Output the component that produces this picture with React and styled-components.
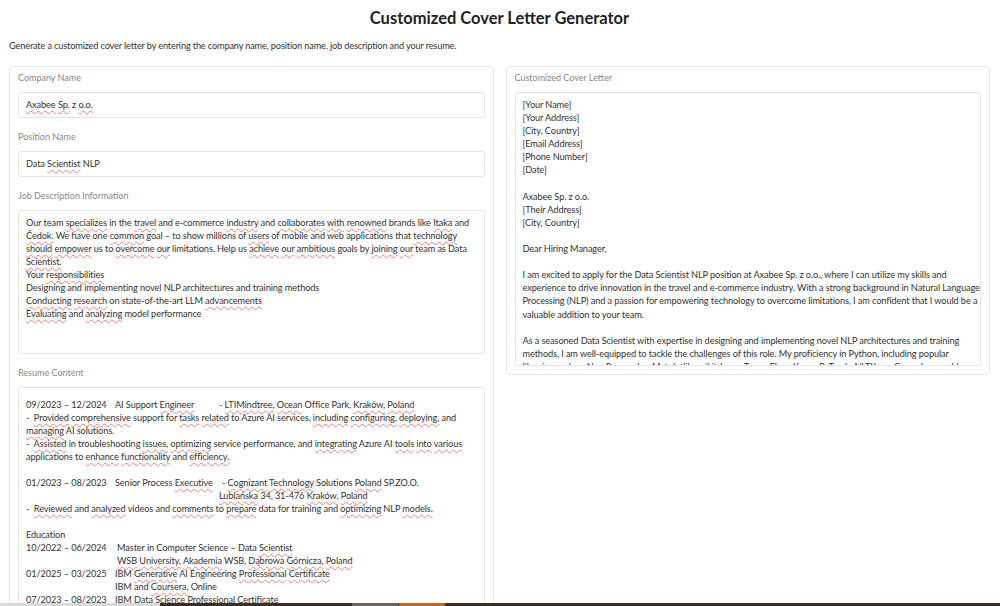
import React from 'react';
import styled, { createGlobalStyle } from 'styled-components';

const GlobalStyle = createGlobalStyle`
  html, body { margin: 0; padding: 0; background: #fff; }
  body { font-family: Lato, "Noto Sans", sans-serif; color: #333; }
  * { box-sizing: border-box; }
`;

const Page = styled.div`
  padding: 0 10px 0 9px;
`;

const Title = styled.h1`
  margin: 0;
  padding-top: 7px;
  text-align: center;
  font-size: 16.5px;
  font-weight: 700;
  line-height: 22px;
  color: #222;
`;

const Intro = styled.p`
  margin: 10px 0 0;
  font-size: 9.2px;
  letter-spacing: -0.15px;
  line-height: 14px;
  color: #333;
`;

const Columns = styled.div`
  margin-top: 13px;
  display: grid;
  grid-template-columns: minmax(0, 1fr) minmax(0, 1fr);
  gap: 12px;
  align-items: start;
`;

const Panel = styled.div`
  border: 1px solid #e3e3e3;
  border-radius: 4px;
  padding: 4px 8px 8px;
  display: flex;
  flex-direction: column;
  gap: 12px;
  min-height: ${p => p.$tall ? '560px' : 'auto'};
`;

const Field = styled.div`
  display: flex;
  flex-direction: column;
  gap: 7px;
`;

const Label = styled.span`
  font-size: 9px;
  line-height: 14px;
  color: #888;
`;

const Input = styled.div`
  height: 26px;
  line-height: 24px;
  padding: 0 7px;
  border: 1px solid #e3e3e3;
  border-radius: 3px;
  font-size: 9.2px;
  letter-spacing: -0.1px;
  color: #333;
`;

const Area = styled.div`
  height: ${p => p.$h}px;
  padding: ${p => p.$pt}px 7px 0;
  border: 1px solid #e3e3e3;
  border-radius: 3px;
  overflow: hidden;
  font-size: 9.2px;
  letter-spacing: -0.1px;
  line-height: ${p => p.$lh}px;
  color: #333;
  white-space: pre;
`;

const Line = styled.div`
  min-height: 1lh;
`;

const Row = styled.div`
  display: flex;
  min-height: 1lh;
`;

const Cell = styled.span`
  flex: none;
  width: ${p => p.$w ? p.$w + 'px' : 'auto'};
  padding-left: ${p => p.$pl || 0}px;
`;

const Typo = styled.span`
  text-decoration: underline wavy #f07a7a;
  text-decoration-thickness: 1px;
  text-underline-offset: 2px;
  text-decoration-skip-ink: none;
`;

const BottomBar = styled.div`
  position: fixed;
  left: 0;
  right: 0;
  bottom: 0;
  height: 3px;
  display: flex;
`;

const Seg = styled.div`
  width: ${p => p.$w ? p.$w + 'px' : 'auto'};
  flex: ${p => p.$w ? 'none' : '1'};
  background: ${p => p.$c};
`;

const flagged = new Set([
  'Axabee', 'Sp.', 'o.o.', 'Scientist', 'Scientist.', 'specializes', 'travel', 'industry', 'collaborates',
  'with', 'renowned', 'Itaka', 'Čedok.', 'common', 'users', 'technology', 'should', 'empower',
  'overcome', 'our', 'achieve', 'ambitious', 'joining', 'responsibilities', 'Conducting',
  'research', 'advancements', 'Evaluating', 'analyzing', 'Engineer', 'LTIMindtree,', 'Ocean',
  'Kraków,', 'Poland', 'Provided', 'comprehensive', 'tasks', 'related', 'including',
  'configuring,', 'deploying,', 'managing', 'Assisted', 'issues,', 'optimizing', 'integrating',
  'tools', 'into', 'various', 'enhance', 'functionality', 'efficiency.', 'Executive', 'Cognizant',
  'Technology', 'Lublańska', 'Reviewed', 'analyzed', 'comments', 'prepare', 'models.', 'WSB',
  'University,', 'Akademia', 'Dąbrowa', 'Górnicza,', 'Generative', 'Certificate', 'Coursera,',
  'Professional', 'Poland.'
]);

const Spell = ({ text }) => {
  const parts = text.split(/(\s+)/);
  return parts.map((w, i) => flagged.has(w) ? <Typo key={i}>{w}</Typo> : w);
};

const jobLines = [
  'Our team specializes in the travel and e-commerce industry and collaborates with renowned brands like Itaka and',
  'Čedok. We have one common goal – to show millions of users of mobile and web applications that technology',
  'should empower us to overcome our limitations. Help us achieve our ambitious goals by joining our team as Data',
  'Scientist.',
  'Your responsibilities',
  'Designing and implementing novel NLP architectures and training methods',
  'Conducting research on state-of-the-art LLM advancements',
  'Evaluating and analyzing model performance',
];

const letterLines = [
  '[Your Name]', '[Your Address]', '[City, Country]', '[Email Address]', '[Phone Number]', '[Date]', '',
  'Axabee Sp. z o.o.', '[Their Address]', '[City, Country]', '',
  'Dear Hiring Manager,', '',
  'I am excited to apply for the Data Scientist NLP position at Axabee Sp. z o.o., where I can utilize my skills and',
  'experience to drive innovation in the travel and e-commerce industry. With a strong background in Natural Language',
  'Processing (NLP) and a passion for empowering technology to overcome limitations, I am confident that I would be a',
  'valuable addition to your team.', '',
  'As a seasoned Data Scientist with expertise in designing and implementing novel NLP architectures and training',
  'methods, I am well-equipped to tackle the challenges of this role. My proficiency in Python, including popular',
  'libraries such as NumPy, pandas, Matplotlib, scikit-learn, TensorFlow, Keras, PyTorch, NLTK, spaCy, and re, enables',
];

const resumeRows = [
  { cells: ['09/2023 – 12/2024', 'AI Support Engineer', '- LTIMindtree, Ocean Office Park, Kraków, Poland'] },
  { text: '-  Provided comprehensive support for tasks related to Azure AI services, including configuring, deploying, and' },
  { text: 'managing AI solutions.' },
  { text: '-  Assisted in troubleshooting issues, optimizing service performance, and integrating Azure AI tools into various' },
  { text: 'applications to enhance functionality and efficiency.' },
  { text: '' },
  { cells: ['01/2023 – 08/2023', 'Senior Process Executive', '- Cognizant Technology Solutions Poland SP.ZO.O.'], placePad: 3 },
  { cells: ['', '', 'Lublańska 34, 31-476 Kraków, Poland'] },
  { text: '-  Reviewed and analyzed videos and comments to prepare data for training and optimizing NLP models.' },
  { text: '' },
  { text: 'Education' },
  { cells: ['10/2022 – 06/2024', 'Master in Computer Science – Data Scientist'], titlePad: 2, wide: true },
  { cells: ['', 'WSB University, Akademia WSB, Dąbrowa Górnicza, Poland'], titlePad: 2, wide: true },
  { cells: ['01/2025 – 03/2025', 'IBM Generative AI Engineering Professional Certificate'], wide: true },
  { cells: ['', 'IBM and Coursera, Online'], wide: true },
  { cells: ['07/2023 – 08/2023', 'IBM Data Science Professional Certificate'], wide: true },
  { cells: ['', 'IBM and Coursera, Online'], wide: true },
];

const ResumeRow = ({ row }) => {
  if (row.cells === undefined) {
    return <Line><Spell text={row.text} /></Line>;
  }
  const [date, title, place] = row.cells;
  return (
    <Row>
      <Cell $w={89}>{date}</Cell>
      <Cell $w={row.wide ? undefined : 104} $pl={row.titlePad}><Spell text={title} /></Cell>
      {place !== undefined && <Cell $pl={row.placePad}><Spell text={place} /></Cell>}
    </Row>
  );
};

export default function App() {
  return (
    <>
      <GlobalStyle />
      <Page>
        <Title>Customized Cover Letter Generator</Title>
        <Intro>Generate a customized cover letter by entering the company name, position name, job description and your resume.</Intro>
        <Columns>
          <Panel $tall>
            <Field>
              <Label>Company Name</Label>
              <Input><Spell text="Axabee Sp. z o.o." /></Input>
            </Field>
            <Field>
              <Label>Position Name</Label>
              <Input><Spell text="Data Scientist NLP" /></Input>
            </Field>
            <Field>
              <Label>Job Description Information</Label>
              <Area $h={144} $pt={5} $lh={13}>
                {jobLines.map((l, i) => <Line key={i}><Spell text={l} /></Line>)}
              </Area>
            </Field>
            <Field>
              <Label>Resume Content</Label>
              <Area $h={240} $pt={10} $lh={13}>
                {resumeRows.map((r, i) => <ResumeRow key={i} row={r} />)}
              </Area>
            </Field>
          </Panel>
          <Panel>
            <Field>
              <Label>Customized Cover Letter</Label>
              <Area $h={274} $pt={5} $lh={13.1}>
                {letterLines.map((l, i) => <Line key={i}>{l}</Line>)}
              </Area>
            </Field>
          </Panel>
        </Columns>
      </Page>
      <BottomBar>
        <Seg $w={160} $c="#d9d9d9" />
        <Seg $w={192} $c="#3b2f25" />
        <Seg $w={46} $c="#6e655c" />
        <Seg $w={1} $c="#3b2f25" />
        <Seg $w={46} $c="#b86a2b" />
        <Seg $c="#3b2f25" />
      </BottomBar>
    </>
  );
}
